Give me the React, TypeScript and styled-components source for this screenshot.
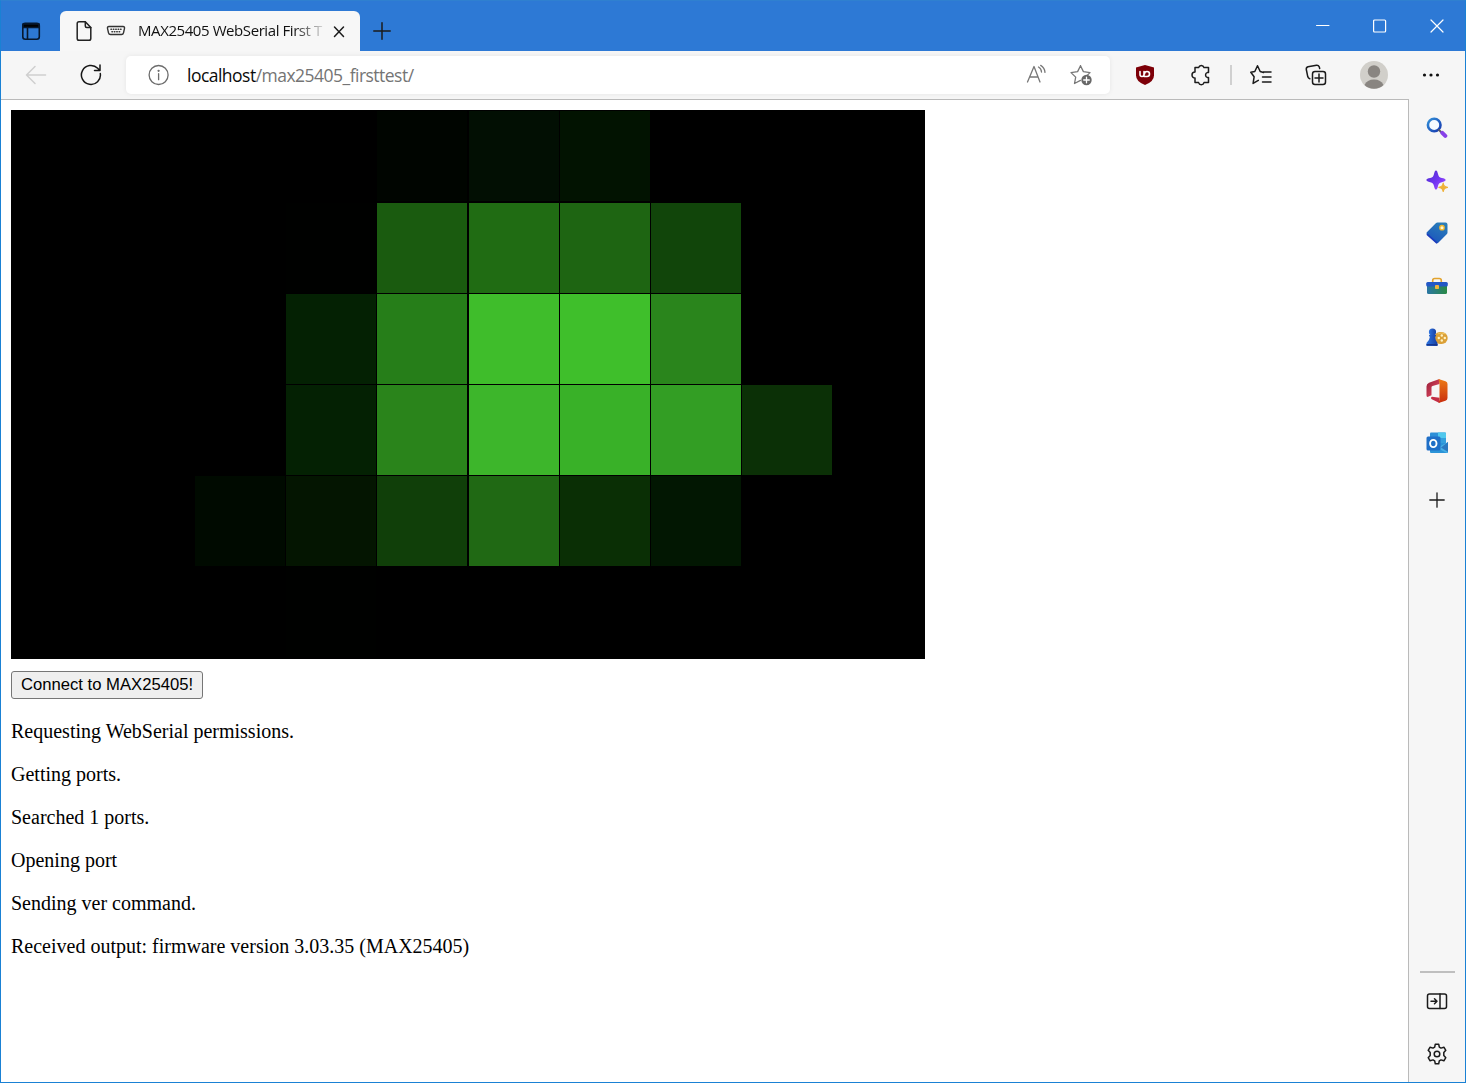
import React from 'react';
import styled, { createGlobalStyle } from 'styled-components';

const Global = createGlobalStyle`
  *, *::before, *::after { box-sizing: border-box; }
  body { margin: 0; background: #fff; }
  svg { display: block; flex: none; }
`;

const uiFont = `"Open Sans", "Noto Sans", sans-serif`;

const Window = styled.div`
  width: 1466px;
  height: 1083px;
  display: flex;
  flex-direction: column;
  border: 1px solid #1a81d4;
  border-top-color: #2f80d0;
  background: #f6f6f6;
  overflow: hidden;
  font-family: ${uiFont};
`;

const TitleBar = styled.header`
  height: 50px;
  flex: none;
  display: flex;
  align-items: flex-end;
  background: #2d79d5;
  padding-left: 19px;
`;

const TitleIcon = styled.div`
  height: 40px;
  width: ${(p: { $w: number }) => p.$w}px;
  display: flex;
  align-items: center;
`;

const Tab = styled.div`
  width: 300px;
  height: 40px;
  display: flex;
  align-items: center;
  padding-left: 15px;
  border-radius: 6px 6px 0 0;
  background: #f7f7f7;
`;

const TabTitle = styled.div`
  width: 188px;
  margin-top: -2px;
  white-space: nowrap;
  font-size: 15px;
  line-height: 22px;
  letter-spacing: -0.42px;
  color: #111;
  mask-image: linear-gradient(to right, #000 155px, transparent 190px);
`;

const TabClose = styled.div`
  margin: 2px 0 0 6px;
`;

const WindowControls = styled.div`
  height: 50px;
  margin-left: auto;
  display: flex;
  align-items: center;
`;

const Control = styled.div`
  width: 57px;
  display: flex;
  justify-content: center;
`;

const Toolbar = styled.nav`
  height: 48px;
  flex: none;
  display: flex;
  align-items: center;
`;

const NavButton = styled.div`
  width: ${(p: { $w: number }) => p.$w}px;
  flex: none;
  display: flex;
  justify-content: center;
`;

const AddressBar = styled.div`
  width: 984px;
  height: 38px;
  flex: none;
  margin-left: 15px;
  display: flex;
  align-items: center;
  padding: 0 17px 0 22px;
  border-radius: 5px;
  background: #fff;
  box-shadow: 0 0 5px rgba(0, 0, 0, 0.07);
`;

const Url = styled.div`
  margin: -1px 0 0 17px;
  font-size: 17.5px;
  line-height: 24px;
  letter-spacing: -0.52px;
  color: #747474;
`;

const Host = styled.span`
  color: #0a0a0a;
`;

const AddressActions = styled.div`
  margin-left: auto;
  display: flex;
  align-items: center;
  gap: 22px;
`;

const Divider = styled.div`
  width: 2px;
  height: 20px;
  background: #d0d0d0;
`;

const Main = styled.div`
  flex: 1;
  min-height: 0;
  display: flex;
`;

const Page = styled.main`
  width: 1408px;
  padding: 10px;
  border-top: 1px solid #bababa;
  border-right: 1px solid #bababa;
  background: #fff;
  font-family: "Liberation Serif", "Times New Roman", serif;
`;

const Sensor = styled.div`
  width: 914px;
  height: 549px;
  padding: 1px;
  display: grid;
  grid-template-columns: 91px 92px 91px 91px 92px 91px 91px 91px 92px 90px;
  grid-template-rows: 92px 91px 91px 91px 91px 91px;
  background: #000;
`;

const Pixel = styled.div`
  width: 90px;
  height: 90px;
  background: ${(p: { $color: string }) => p.$color};
`;

const ConnectButton = styled.button`
  display: block;
  width: 192px;
  height: 28px;
  margin: 12px 0 21px;
  padding: 0;
  border: 1px solid #767676;
  border-radius: 3px;
  background: #efefef;
  color: #000;
  font: 16.67px/24px "Liberation Sans", Arial, sans-serif;
  white-space: nowrap;
`;

const LogLine = styled.p`
  margin: 0 0 20px;
  font-size: 20px;
  line-height: 23px;
  color: #000;
`;

const Sidebar = styled.aside`
  flex: 1;
  display: flex;
  flex-direction: column;
  align-items: center;
  padding-top: 3px;
`;

const SideItem = styled.div`
  height: ${(p: { $h?: number }) => p.$h ?? 52.5}px;
  display: flex;
  align-items: center;
  justify-content: center;
`;

const SideRule = styled.div`
  width: 35px;
  height: 2px;
  margin-top: auto;
  margin-bottom: 2px;
  background: #bfbfbf;
`;

const SideFooter = styled.div`
  padding-bottom: 2px;
`;

const K = '#000';
const cells: string[][] = [
  ['', '', '', '', '#000500', '#020f03', '#021301', '', '', ''],
  ['', '', '', '#000100', '#1a5b0f', '#206c13', '#1e6512', '#11450a', '', ''],
  ['', '', '', '#042103', '#267e19', '#3fbd2b', '#3fbf2b', '#2a851c', '', ''],
  ['', '', '', '#042103', '#2a841b', '#3db62b', '#39b128', '#339e24', '#0b3006', ''],
  ['', '', '#000a00', '#041501', '#103f09', '#206914', '#0a2f05', '#021702', '', ''],
  ['', '', '', '#000100', '', '', '', '', '', ''],
];

const log = [
  'Requesting WebSerial permissions.',
  'Getting ports.',
  'Searched 1 ports.',
  'Opening port',
  'Sending ver command.',
  'Received output: firmware version 3.03.35 (MAX25405)',
];

type IconProps = { w?: number; h?: number; stroke?: string; sw?: number; children: React.ReactNode };
const Icon = ({ w = 22, h = 22, stroke = '#1b1b1b', sw = 1.5, children }: IconProps) => (
  <svg width={w} height={h} viewBox={`0 0 ${w} ${h}`} fill="none" stroke={stroke} strokeWidth={sw} strokeLinecap="round" strokeLinejoin="round">
    {children}
  </svg>
);

const SearchIcon = () => (
  <Icon stroke="none">
    <defs>
      <linearGradient id="lens" x1="0" y1="0" x2="1" y2="1"><stop stopColor="#3290d8" /><stop offset="1" stopColor="#1739af" /></linearGradient>
    </defs>
    <circle cx="8.2" cy="8" r="6.3" stroke="url(#lens)" strokeWidth="2.6" fill="#f6fbff" />
    <path d="m13 13 2.500 2.500" stroke="#5d5b66" strokeWidth="2" />
    <path d="m16.300 15.800 3 3" stroke="#8741e8" strokeWidth="4" />
  </Icon>
);

const SparkIcon = () => (
  <Icon stroke="none">
    <defs>
      <linearGradient id="spark" x1="0" y1="0" x2="1" y2="1"><stop stopColor="#4b2ecc" /><stop offset=".55" stopColor="#7336f3" /><stop offset="1" stopColor="#b65aff" /></linearGradient>
    </defs>
    <path d="M10 .5c1.100 0 1.500 1.500 2 3.600.6 2.600 1.200 3.300 3.800 3.900 2.300.5 3.800.9 3.800 2.100s-1.500 1.600-3.800 2.100c-2.600.6-3.200 1.300-3.800 3.900-.5 2.100-.9 3.600-2 3.600s-1.500-1.500-2-3.600c-.6-2.600-1.200-3.300-3.800-3.900C1.900 11.700.4 11.300.4 10.100S1.900 8.500 4.200 8c2.600-.6 3.200-1.300 3.800-3.900C8.500 2 8.900.5 10 .5Z" fill="url(#spark)" />
    <path d="M17.200 13c.6 2.900 1 3.600 4.300 4.400-3.300.8-3.700 1.500-4.300 4.300-.6-2.800-1-3.500-4.300-4.300 3.300-.8 3.700-1.500 4.300-4.400Z" fill="#efb137" stroke="#efb137" strokeWidth="1.100" />
  </Icon>
);

const TagIcon = () => (
  <Icon stroke="none">
    <defs><linearGradient id="tag" x1=".8" y1="0" x2=".3" y2="1"><stop stopColor="#2a7fb8" /><stop offset="1" stopColor="#1c55bd" /></linearGradient></defs>
    <path d="M11.500 .5h8q2 0 2 2v8q0 1-.8 1.800l-8.200 8.200q-1.300 1.300-2.600 0L1.100 12.500q-1.200-1.200 0-2.400l8.700-8.800Q10.500 .5 11.500 .5Z" fill="url(#tag)" />
    <path d="M1.500 12.600 10.500 20.700" stroke="#1b3bbd" strokeWidth="1.800" />
    <circle cx="16" cy="5.700" r="2.200" fill="#fff5d0" stroke="#eeb730" strokeWidth="1.300" />
  </Icon>
);

const ToolboxIcon = () => (
  <Icon stroke="none">
    <defs><linearGradient id="box" x2="1"><stop stopColor="#2a76a4" /><stop offset="1" stopColor="#2a8a44" /></linearGradient></defs>
    <path d="M6.700 7.500V5.500q0-2 2-2h4.600q2 0 2 2v2" stroke="#e2a32e" strokeWidth="1.600" />
    <path d="M1 9h20v8.500q0 1.500-1.500 1.500h-17Q1 19 1 17.500Z" fill="url(#box)" />
    <rect x=".2" y="7" width="21.600" height="4.500" rx="1.500" fill="#2358c6" />
    <rect x="9" y="10" width="4" height="4" rx=".8" fill="#f1b43d" />
  </Icon>
);

const GamesIcon = () => (
  <Icon stroke="none">
    <defs><linearGradient id="pawn" x2="1"><stop stopColor="#2c73e0" /><stop offset="1" stopColor="#183fa2" /></linearGradient></defs>
    <rect x="8" y="5" width="13.700" height="12" rx="6" fill="#dba037" />
    <path d="M12 6.700q3-1.700 7 0" stroke="#f3c75f" strokeWidth="1" />
    <g fill="#fff2c4"><circle cx="15.800" cy="8.500" r="1.200" /><circle cx="12.800" cy="11" r="1.200" /><circle cx="18.800" cy="11" r="1.200" /><circle cx="15.800" cy="13.500" r="1.200" /></g>
    <circle cx="6.500" cy="5" r="3.600" fill="url(#pawn)" />
    <path d="M3 8h7v1.500H9q.2 4 2.500 6.500v3H.5v-3Q3.500 13.500 4 9.500H3Z" fill="url(#pawn)" />
    <path d="M1 17.800h10" stroke="#16358c" />
  </Icon>
);

const OfficeIcon = () => (
  <Icon w={22} h={24} stroke="none">
    <defs>
      <linearGradient id="officeL" y2="1"><stop stopColor="#951d37" /><stop offset="1" stopColor="#ee5068" /></linearGradient>
      <linearGradient id="officeR" x2="0" y2="1"><stop stopColor="#ed7b17" /><stop offset="1" stopColor="#c92d0d" /></linearGradient>
    </defs>
    <path d="m13.500 0-10.500 3.800Q.5 4.800.5 7.500v8.800q0 2 1.600 1.500l3.400-1.500V8.200q0-1 1-1.300L13.500 5Z" fill="url(#officeL)" />
    <path d="m6 17.800 7.500 1V24l-7.700-3.700Q4 19 6 17.800Z" fill="#c42d46" />
    <path d="m12.500 0 7 2.200q2 .8 2 2.800v14q0 2-2 2.800l-7 2.200 1-3V4.500Z" fill="url(#officeR)" />
  </Icon>
);

const OutlookIcon = () => (
  <Icon stroke="none">
    <path d="M4 1.500Q4 .5 5 .5h14q1 0 1 1V12H4Z" fill="#2c8fd8" />
    <path d="M12 .5h7q1 0 1 1V7h-8Z" fill="#50c8ed" />
    <path d="M12 6h8v6h-8Z" fill="#349fdd" />
    <path d="M4 11h18v9q0 1-1 1H5q-1 0-1-1Z" fill="#2b94d8" />
    <path d="M22 10v10q0 1-1 1L11 16Z" fill="#47b0e5" />
    <path d="M22 10v10l-7-4.500Z" fill="#2b78c0" />
    <rect x="0.500" y="4.500" width="14" height="14" rx="1.500" fill="#1f6fc7" />
    <ellipse cx="7.300" cy="11.500" rx="3.200" ry="3.600" stroke="#fff" strokeWidth="1.900" />
  </Icon>
);

const GearIcon = () => (
  <Icon>
    <path d="M9.300 1.200h3.400l.6 2.900 1.700 1 2.900-.9 1.900 3.100-2 2.300v2.800l2 2.300-1.900 3.100-2.900-.9-1.700 1-.6 2.900H9.300l-.6-2.900-1.700-1-2.900.9-1.900-3.100 2-2.300V9.600l-2-2.300 1.900-3.100 2.900.9 1.700-1Z" />
    <circle cx="11" cy="11" r="2.800" />
  </Icon>
);

const SerialPortIcon = () => (
  <Icon w={20} h={12} stroke="#333" sw={1.400}>
    <path d="M3 1.500h14q1.800 0 1.500 1.800l-1 4.500q-.4 1.700-2 1.700h-11q-1.600 0-2-1.700l-1-4.500Q1.200 1.500 3 1.500Z" />
    <path d="M5 4.300h10.500M6 6.800h8.500" strokeWidth="1.600" strokeDasharray=".4 2" />
  </Icon>
);

const SensorView = () => (
  <Sensor>
    {cells.flatMap((row, y) => row.map((color, x) => <Pixel key={`${y}-${x}`} $color={color || K} />))}
  </Sensor>
);

export default function App() {
  return (
    <>
      <Global />
      <Window>
        <TitleBar>
          <TitleIcon $w={40}>
            <Icon stroke="#07182f" sw={1.600}><rect x="2.800" y="3.300" width="16.500" height="16" rx="2.500" /><path d="M3 4h16v3.500H3Z" fill="#000" /><path d="M7.500 7.500V19" /></Icon>
          </TitleIcon>
          <Tab>
            <Icon w={18} h={22} stroke="#222"><path d="M4 1.700h6.300l5.500 5.800v11q0 1.800-1.800 1.800H4q-1.800 0-1.800-1.800v-15q0-1.800 1.800-1.800Z" /><path d="M10.300 2v4q0 1.500 1.500 1.500h4" /></Icon>
            <NavButton $w={45}><SerialPortIcon /></NavButton>
            <TabTitle>MAX25405 WebSerial First T</TabTitle>
            <TabClose><Icon w={14} h={14} sw={1.500}><path d="m2.500 2 9 9.500m0-9.500-9 9.500" /></Icon></TabClose>
          </Tab>
          <TitleIcon $w={44}>
            <NavButton $w={43}><Icon w={18} h={18} sw={1.500}><path d="M9 .8v16.400M.8 9h16.400" /></Icon></NavButton>
          </TitleIcon>
          <WindowControls>
            <Control><Icon w={14} h={14} stroke="#fff" sw={1}><path d="M.5 6.500h12.500" /></Icon></Control>
            <Control><Icon w={14} h={14} stroke="#fff" sw={1.200}><rect x=".6" y="1" width="12" height="12" rx="1" /></Icon></Control>
            <Control><Icon w={14} h={14} stroke="#fff" sw={1.200}><path d="m1 1 12 12M13 1 1 13" /></Icon></Control>
          </WindowControls>
        </TitleBar>

        <Toolbar>
          <NavButton $w={69}><Icon stroke="#cfcfcf"><path d="M20.500 11H1.500m8.500-8.500L1.500 11l8.500 8.500" /></Icon></NavButton>
          <NavButton $w={41}><Icon stroke="#161616"><path d="M20.300 9.500a9.500 9.500 0 1 1-2.600-5.200l1.800 1.900M20 1v5.500h-5.500" /></Icon></NavButton>
          <AddressBar>
            <Icon stroke="#6c6c6c" sw={1.300}><circle cx="10.600" cy="11" r="9.500" /><path d="M10.600 9.700v6" /><circle cx="10.600" cy="6.800" r=".5" fill="#6c6c6c" /></Icon>
            <Url><Host>localhost</Host>/max25405_firsttest/</Url>
            <AddressActions>
              <Icon w={22} stroke="#777" sw={1.300}><path d="M1.500 18 8 2.500 14 18M3.700 13h8.300M12.500 3q2.800 1.500 3 5M14.700 1.400q4 2.500 4.300 7" /></Icon>
              <Icon w={23} stroke="#777" sw={1.300}>
                <path d="m10.500 1.700 2.900 5.900 6.600 1-2.800 2.800M10.500 16.400l-6 3.100 1.200-6.400L1 8.600l6.600-1 2.900-5.900" />
                <circle cx="16.500" cy="16" r="5.200" fill="#686868" stroke="none" /><path d="M16.500 13.200v5.600m-2.800-2.800h5.600" stroke="#fff" />
              </Icon>
            </AddressActions>
          </AddressBar>
          <NavButton $w={69}>
            <Icon w={20} stroke="none"><path d="m10 1 9 2.500v8q0 6-9 9.500-9-3.500-9-9.500v-8Z" fill="#7d0008" /><path d="M5 7.500v3q0 2 2 2t2-2v-3m0 3V12.500h3q2.500 0 2.500-2.500T12 7.500t-2.500 2.500" stroke="#fff" strokeWidth="1.600" /></Icon>
          </NavButton>
          <NavButton $w={43}>
            <Icon sw={1.500}><path d="M5 3.600h3.600a2.800 2.800 0 0 1 5.400 0h4.500v4.800h-1a2.700 2.700 0 0 0 0 5.200h1v5H14a2.800 2.800 0 0 1-5.400 0H5v-4.500a3 3 0 0 1 0-6Z" /></Icon>
          </NavButton>
          <NavButton $w={17}><Divider /></NavButton>
          <NavButton $w={44}>
            <Icon w={23}><path d="m13.500 8.500-3.300-1-2.700-5.800-2.700 5.800-4 .8 3.300 4.500-1 6.600 5.200-3M13.500 8h7.500M12.500 13H21M12.500 18H21" /></Icon>
          </NavButton>
          <NavButton $w={66}>
            <Icon w={22}><rect x="7.500" y="7.500" width="13" height="13" rx="2.500" /><path d="M14 10v8m-4-4h8M4.800 14.800q-1.500-.5-2-2L1.300 5.500Q1 3.400 3 2.800l8.500-1.500q2-.2 2.700 1.500l.5 1.700" /></Icon>
          </NavButton>
          <NavButton $w={49}>
            <Icon w={28} h={28} stroke="none">
              <circle cx="14" cy="14" r="14" fill="#d1cfca" /><circle cx="14" cy="10.500" r="6.200" fill="#898581" /><path d="M4.500 24q2.500-5.500 9.500-5.500t9.500 5.500A14 14 0 0 1 4.500 24Z" fill="#898581" />
            </Icon>
          </NavButton>
          <NavButton $w={66}>
            <Icon w={18} h={6} stroke="none"><g fill="#111"><circle cx="2.500" cy="3" r="1.600" /><circle cx="9" cy="3" r="1.600" /><circle cx="15.500" cy="3" r="1.600" /></g></Icon>
          </NavButton>
        </Toolbar>

        <Main>
          <Page>
            <SensorView />
            <ConnectButton>Connect to MAX25405!</ConnectButton>
            {log.map((line) => <LogLine key={line}>{line}</LogLine>)}
          </Page>
          <Sidebar>
            <SideItem><SearchIcon /></SideItem>
            <SideItem><SparkIcon /></SideItem>
            <SideItem><TagIcon /></SideItem>
            <SideItem><ToolboxIcon /></SideItem>
            <SideItem><GamesIcon /></SideItem>
            <SideItem><OfficeIcon /></SideItem>
            <SideItem><OutlookIcon /></SideItem>
            <SideItem $h={60}><Icon w={16} h={16} sw={1.300}><path d="M8 .8v14.400M.8 8h14.400" /></Icon></SideItem>
            <SideRule />
            <SideFooter>
              <SideItem><Icon w={22}><rect x="1.500" y="4" width="19" height="14.500" rx="2" /><path d="M14 4v14.500M5 11.200h6M8.500 8.700 11 11.200l-2.500 2.500" /></Icon></SideItem>
              <SideItem><GearIcon /></SideItem>
            </SideFooter>
          </Sidebar>
        </Main>
      </Window>
    </>
  );
}
